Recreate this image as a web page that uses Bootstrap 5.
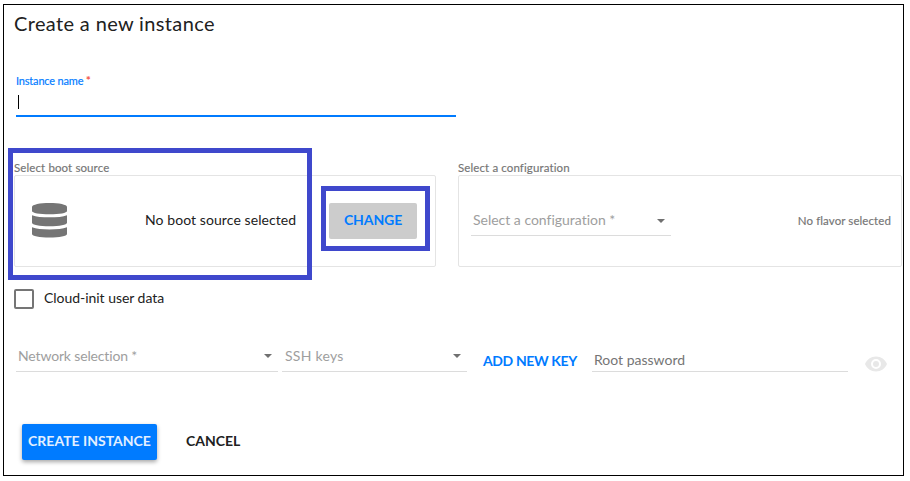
<!DOCTYPE html>
<html lang="en">
<head>
<meta charset="utf-8">
<meta name="viewport" content="width=device-width, initial-scale=1">
<title>Create a new instance</title>
<link href="https://cdn.jsdelivr.net/npm/bootstrap@5.3.0/dist/css/bootstrap.min.css" rel="stylesheet">
<style>
body{font-family:Lato,"Open Sans",sans-serif;font-size:14px;line-height:20px;color:#212121;background:#fff;overflow:hidden}
.frame{width:901px;height:472px;margin:4px 0 0 3px;border:1px solid #000}
.page-title{font-size:20px;line-height:28px;font-weight:400;letter-spacing:.36px;padding:4px 0 0 10px;height:69px}
.name-field{width:440px;height:43px;margin-left:12px;border-bottom:2px solid #007bff}
.name-label{font-size:11px;line-height:14px;letter-spacing:-.18px;color:#007bff;height:21px;-webkit-text-stroke:.15px}
.name-label b{color:#f44336;font-weight:400}
.text-caret{width:1px;height:14px;background:#000;margin-left:2px}
.sources{margin-top:44px;padding-left:10px;gap:22px}
.group-label{font-size:11.5px;line-height:14px;letter-spacing:.11px;color:#757575}
.group-label span,.small-note{-webkit-text-stroke:.15px}
.panel{height:92px;border:1px solid #e4e4e4;border-radius:2px}
.boot{width:422px}
.config{width:444px}
.boot .panel{padding:0 18px 0 17px}
.config .panel{padding:0 10px 0 12px}
.outline-mark{position:absolute;border:5px solid #3f48cc;pointer-events:none}
.mark-source{left:-6px;top:-13px;width:304px;height:132px}
.mark-change{left:24px;top:-17px;width:109px;height:65px}
.boot-text{margin-left:78px;width:152px;letter-spacing:.08px;padding-bottom:2px}
.action{height:36px;border:0;border-radius:2px;padding:0 0 2px;font-size:14px;font-weight:700;line-height:34px}
.change{width:88px;background:#ccc;color:#007bff;margin-left:32px;letter-spacing:-.1px}
.field{border-bottom:1px solid #dcdcdc;color:#9e9e9e}
.arrow{width:0;height:0;border:4px solid transparent;border-top-color:#707070;border-bottom:0}
.cfg-select{width:200px;height:31px;padding:0 6px 0 2px;margin-top:29px;letter-spacing:-.01px}
.cfg-select .arrow{margin-top:2px}
.small-note{font-size:11.5px;letter-spacing:.09px;color:#757575}
.check{width:20px;height:20px;border:2px solid #757575;border-radius:2px}
.cloud{height:20px;margin:22px 0 0 10px;gap:10px}
.t-cloud{padding-bottom:2px;letter-spacing:-.04px}
.inputs{height:63px;padding:0 15px 0 12px}
.inputs > *{flex-shrink:0}
.net{width:262px;height:26px;padding:0 6px 0 2px;letter-spacing:-.15px}
.ssh{width:185px;height:26px;padding:0 6px 0 3px;margin-left:4px;letter-spacing:.25px}
.add-key{color:#007bff;width:94px;margin:0 15px 1px 16px;white-space:nowrap;font-weight:700;letter-spacing:-.38px}
.root{width:256px;height:22px;padding-left:2px;color:#757575}
.buttons{margin-top:52px;padding-left:18px}
.create{width:135px;background:#007bff;color:#e3efff;box-shadow:0 2px 4px rgba(0,0,0,.35)}
.cancel{background:none;margin-left:29px;color:#212121}
.eye{margin-left:16px;margin-bottom:-4px}
.disks{margin-bottom:2px}
</style>
</head>
<body>
<main class="frame">
  <h1 class="page-title m-0">Create a new instance</h1>
  <div class="name-field"><div class="name-label">Instance name <b>*</b></div><div class="text-caret"></div></div>
  <section class="sources d-flex">
    <div class="boot position-relative">
      <div class="group-label"><span>Select boot source</span></div>
      <div class="panel d-flex align-items-center">
        <svg class="disks" width="35" height="35" viewBox="0 0 35 35" fill="#757575"><path d="M0 4C0 1.500 8 0 17.500 0S35 1.500 35 4v4c0 2-7.500 3.300-17.500 3.300S0 10 0 8z"/><path d="M0 12.200c4 1.600 10 2.100 17.500 2.100S31 13.800 35 12.200v7.500c0 2-7.500 3.500-17.500 3.500S0 21.700 0 19.700z"/><path d="M0 24.300c4 1.600 10 2.100 17.500 2.100S31 25.900 35 24.300V31c0 2-7.500 3.500-17.500 3.500S0 33 0 31z"/></svg>
        <span class="boot-text text-nowrap">No boot source selected</span>
        <div class="position-relative"><button class="action change d-block">CHANGE</button><span class="outline-mark mark-change"></span></div>
      </div>
      <span class="outline-mark mark-source"></span>
    </div>
    <div class="config">
      <div class="group-label"><span>Select a configuration</span></div>
      <div class="panel d-flex justify-content-between">
        <div class="field cfg-select d-flex align-items-center justify-content-between"><span>Select a configuration *</span><i class="arrow"></i></div>
        <span class="small-note align-self-center">No flavor selected</span>
      </div>
    </div>
  </section>
  <div class="cloud d-flex align-items-center"><span class="check"></span><span class="t-cloud">Cloud-init user data</span></div>
  <div class="inputs d-flex align-items-end">
    <div class="field net d-flex justify-content-between"><span>Network selection *</span><i class="arrow mt-2"></i></div>
    <div class="field ssh d-flex justify-content-between"><span>SSH keys</span><i class="arrow mt-2"></i></div>
    <span class="add-key">ADD NEW KEY</span>
    <div class="field root"><span>Root password</span></div>
    <svg class="eye" width="24" height="24" viewBox="0 0 24 24" fill="#e8e8e8"><path d="M12 4.500C7 4.500 2.730 7.610 1 12c1.730 4.390 6 7.500 11 7.500s9.270-3.110 11-7.500c-1.730-4.390-6-7.500-11-7.500zM12 17a5 5 0 1 1 0-10 5 5 0 0 1 0 10zm0-8a3 3 0 1 0 0 6 3 3 0 0 0 0-6z"/></svg>
  </div>
  <div class="buttons d-flex"><button class="action create">CREATE INSTANCE</button><button class="action cancel">CANCEL</button></div>
</main>
<script src="https://cdn.jsdelivr.net/npm/bootstrap@5.3.0/dist/js/bootstrap.bundle.min.js"></script>
</body>
</html>
